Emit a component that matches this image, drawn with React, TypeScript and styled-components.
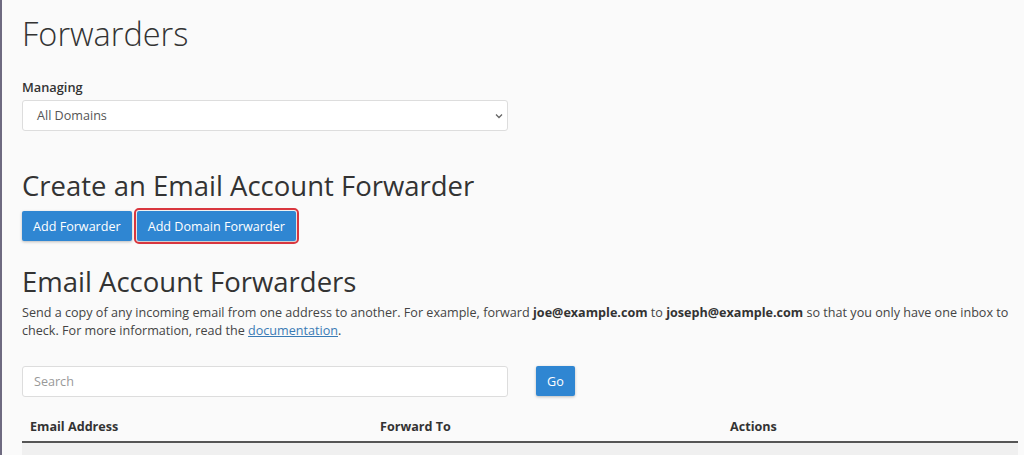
import styled, { createGlobalStyle } from 'styled-components';

const GlobalStyle = createGlobalStyle`
  html, body {
    margin: 0;
    padding: 0;
    background: #fafafa;
    font-family: "Open Sans", "Liberation Sans", sans-serif;
    color: #333;
    overflow: hidden;
  }
`;

// Page frame with the thin left rule
const Page = styled.div`
  height: 455px;
  overflow: hidden;
  border-left: 2px solid #6e6a80;
  padding: 0 4px 0 20px;
  box-sizing: border-box;
`;

const Title = styled.h1`
  margin: 0;
  padding-top: 12px;
  font-size: 32.5px;
  font-weight: 300;
  line-height: 44px;
  color: #333;
`;

const Label = styled.label`
  display: block;
  margin-top: 22px;
  font-size: 12.8px;
  font-weight: 600;
  line-height: 18px;
  color: #333;
`;

const SelectBox = styled.div`
  margin-top: 4px;
  width: 486px;
  height: 31px;
  box-sizing: border-box;
  background: #fff;
  border: 1px solid #ddd;
  border-radius: 3px;
  display: flex;
  align-items: center;
  justify-content: space-between;
  padding: 0 3px 0 14px;
  font-size: 12.6px;
  color: #555;
`;

const SectionTitle = styled.h2<{ $gap: number }>`
  margin: ${p => p.$gap}px 0 0;
  font-size: 27.5px;
  font-weight: 400;
  line-height: 36px;
  color: #333;
`;

const ButtonRow = styled.div`
  display: flex;
  gap: 5px;
  margin-top: 7px;
`;

const Button = styled.button<{ $outlined?: boolean }>`
  height: 30px;
  padding: 0 11px;
  background: #2f86d2;
  color: #fff;
  border: none;
  border-radius: 2px;
  font-family: inherit;
  font-size: 12.6px;
  box-shadow: 0 1px 3px rgba(0, 0, 0, 0.25);
  outline: ${p => (p.$outlined ? '2px solid #d9363e' : 'none')};
  outline-offset: 1px;
`;

const Text = styled.p`
  margin: 4px 0 0;
  font-size: 12.6px;
  line-height: 18px;
  color: #444;

  strong {
    font-weight: 700;
    color: #333;
  }

  a {
    color: #3a7bb5;
    text-decoration: underline;
  }
`;

const SearchRow = styled.div`
  display: flex;
  align-items: flex-start;
  gap: 28px;
  margin-top: 26px;
`;

const SearchInput = styled.div`
  width: 486px;
  height: 31px;
  box-sizing: border-box;
  background: #fff;
  border: 1px solid #ddd;
  border-radius: 3px;
  padding: 0 11px;
  display: flex;
  align-items: center;
  font-size: 12.6px;
  color: #999;
`;

const Table = styled.div`
  margin-top: 14px;
  margin-right: 2px;
`;

const HeaderRow = styled.div`
  display: grid;
  grid-template-columns: 350px 350px 1fr;
  padding: 0 8px;
  height: 30px;
  align-items: center;
  border-bottom: 2px solid #555;
  font-size: 12.6px;
  font-weight: 700;
  color: #333;
`;

const EmptyRow = styled.div`
  height: 40px;
  background: #f0f0f0;
`;

export default function App() {
  return (
    <>
      <GlobalStyle />
      <Page>
        <Title>Forwarders</Title>
        <Label>Managing</Label>
        <SelectBox>
          <span>All Domains</span>
          <svg width="10" height="10" viewBox="0 0 10 10">
            <path d="M2 3.5 L5 6.5 L8 3.5" fill="none" stroke="#666" strokeWidth="1.3" />
          </svg>
        </SelectBox>

        <SectionTitle $gap={37}>Create an Email Account Forwarder</SectionTitle>
        <ButtonRow>
          <Button>Add Forwarder</Button>
          <Button $outlined>Add Domain Forwarder</Button>
        </ButtonRow>

        <SectionTitle $gap={23}>Email Account Forwarders</SectionTitle>
        <Text>
          Send a copy of any incoming email from one address to another. For example, forward{' '}
          <strong>joe@example.com</strong> to <strong>joseph@example.com</strong> so that you only have one inbox to
          check. For more information, read the <a href="#">documentation</a>.
        </Text>

        <SearchRow>
          <SearchInput>Search</SearchInput>
          <Button>Go</Button>
        </SearchRow>

        <Table>
          <HeaderRow>
            <span>Email Address</span>
            <span>Forward To</span>
            <span>Actions</span>
          </HeaderRow>
          <EmptyRow />
        </Table>
      </Page>
    </>
  );
}
